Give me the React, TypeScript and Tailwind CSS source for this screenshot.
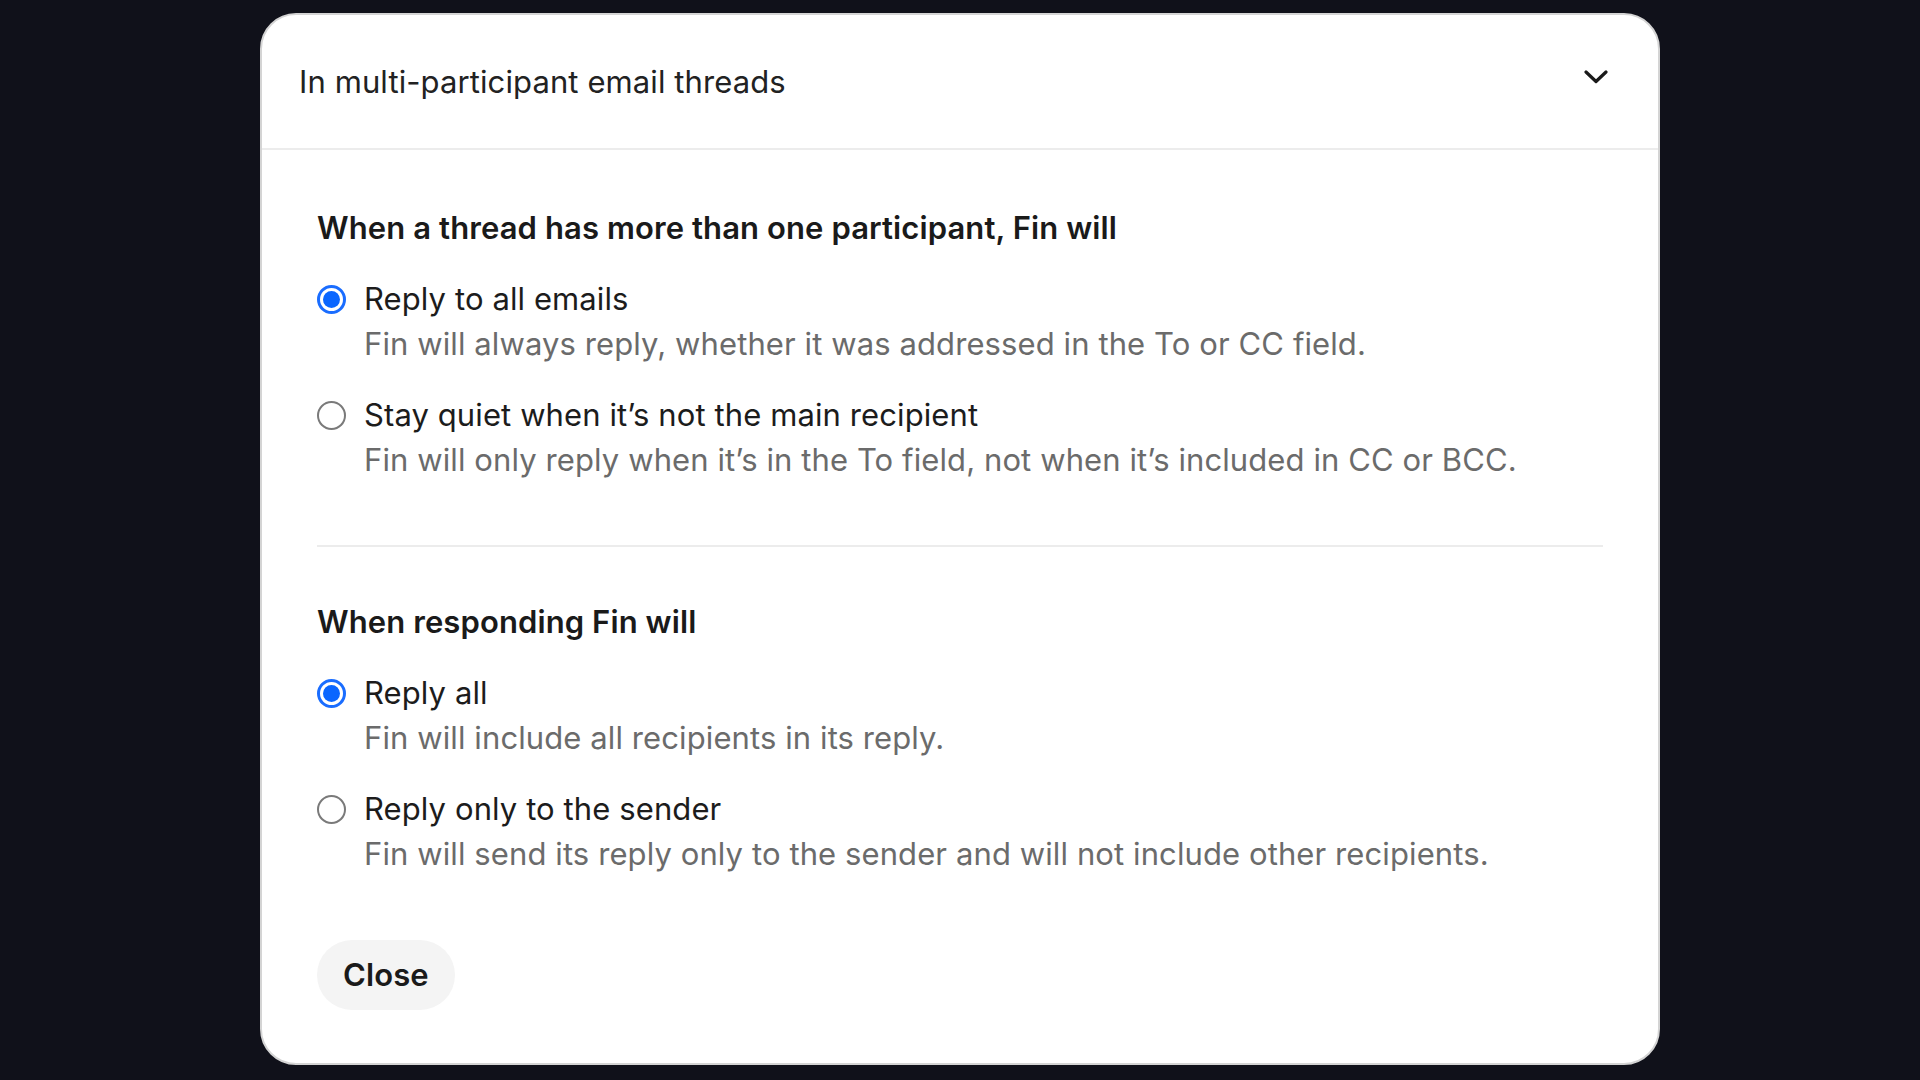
import React from "react";

function Radio({ checked }: { checked: boolean }) {
  if (checked) {
    return (
      <div className="w-[29px] h-[29px] shrink-0 rounded-full border-[3px] border-[#1a6dff] flex items-center justify-center bg-white">
        <div className="w-[17px] h-[17px] rounded-full bg-[#0a66ff]" />
      </div>
    );
  }
  return <div className="w-[29px] h-[29px] shrink-0 rounded-full border-2 border-[#7a7a7a] bg-white" />;
}

function Option({ checked, label, desc }: { checked: boolean; label: string; desc: string }) {
  return (
    <div className="flex">
      <div className="h-[40px] flex items-center">
        <Radio checked={checked} />
      </div>
      <div className="ml-[18px] flex flex-col">
        <div className="leading-[40px] text-[31px] tracking-[0.1px] text-[#1c1c1c]">{label}</div>
        <div className="mt-[5px] leading-[40px] text-[31px] tracking-[0.1px] text-[#6b6b6b]">{desc}</div>
      </div>
    </div>
  );
}

export default function App() {
  return (
    <div
      className="w-[1920px] h-[1080px] bg-[#10111a] pl-[260px] pt-[13px] overflow-hidden"
      style={{ fontFamily: "Inter, 'Noto Sans', sans-serif" }}
    >
      <div className="w-[1400px] h-[1052px] bg-white rounded-[36px] border-2 border-[#d4d4d4] overflow-hidden flex flex-col">
        <div className="h-[135px] shrink-0 flex items-center justify-between pl-[37px] pr-[50px] border-b-2 border-[#ececec]">
          <div className="text-[31px] tracking-[0.1px] text-[#222] leading-[40px]">In multi-participant email threads</div>
          <svg width="24" height="14" viewBox="0 0 24 14" className="-mt-[10px]">
            <path d="M2 2 L12 11.5 L22 2" fill="none" stroke="#1a1a1a" strokeWidth="3.2" strokeLinecap="round" strokeLinejoin="round" />
          </svg>
        </div>
        <div className="flex flex-col px-[55px] pt-[58px]">
          <div className="text-[31px] tracking-[0.1px] leading-[40px] font-semibold text-[#1a1a1a]">
            When a thread has more than one participant, Fin will
          </div>
          <div className="mt-[31px] flex flex-col gap-[31px]">
            <Option
              checked
              label="Reply to all emails"
              desc="Fin will always reply, whether it was addressed in the To or CC field."
            />
            <Option
              checked={false}
              label="Stay quiet when it’s not the main recipient"
              desc="Fin will only reply when it’s in the To field, not when it’s included in CC or BCC."
            />
          </div>
          <div className="mt-[65px] h-[2px] bg-[#ececec]" />
          <div className="mt-[55px] text-[31px] tracking-[0.1px] leading-[40px] font-semibold text-[#1a1a1a]">When responding Fin will</div>
          <div className="mt-[31px] flex flex-col gap-[31px]">
            <Option checked label="Reply all" desc="Fin will include all recipients in its reply." />
            <Option
              checked={false}
              label="Reply only to the sender"
              desc="Fin will send its reply only to the sender and will not include other recipients."
            />
          </div>
          <div className="mt-[66px]">
            <button className="h-[70px] px-[26px] rounded-full bg-[#f4f4f4] text-[31px] tracking-[0.1px] font-semibold text-[#1a1a1a]">
              Close
            </button>
          </div>
        </div>
      </div>
    </div>
  );
}
